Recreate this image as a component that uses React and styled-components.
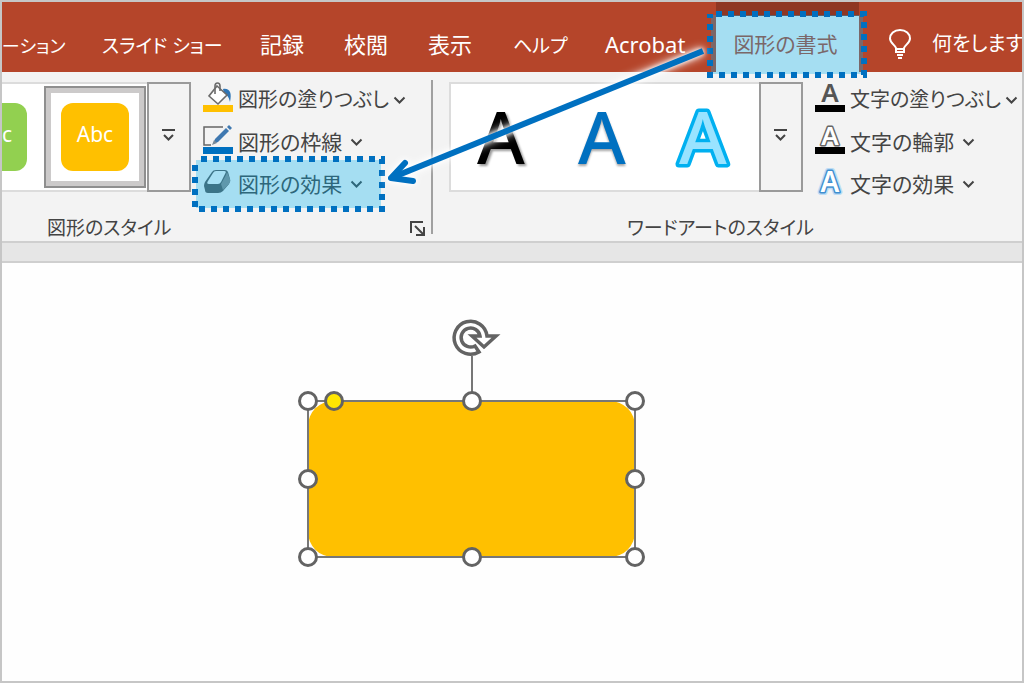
import React from 'react';
import styled, { createGlobalStyle, css } from 'styled-components';

const GlobalStyle = createGlobalStyle`
  * {
    box-sizing: border-box;
  }
  body {
    margin: 0;
    font-family: 'Noto Sans', 'Noto Sans CJK JP', sans-serif;
    font-size: 22px;
    line-height: 32px;
    color: #444;
    font-feature-settings: 'palt';
  }
  button {
    font: inherit;
    font-feature-settings: inherit;
    color: inherit;
    border: 0;
    padding: 0;
    margin: 0;
    background: none;
    cursor: pointer;
  }
  svg {
    flex: none;
    overflow: visible;
  }
`;

const Window = styled.div`
  position: relative;
  display: flex;
  flex-direction: column;
  min-height: 100vh;
  overflow: hidden;
  border: 2px solid #c6c6c6;
  background: #fff;
`;

const TabBar = styled.nav`
  display: flex;
  height: 70px;
  padding-top: 14px;
  background: #b5452a;
  color: #fff;
  white-space: nowrap;
`;

const Tab = styled.button`
  flex: none;
  display: flex;
  align-items: center;
  padding: 0 20px;
  width: ${(p) => p.$width}px;
  color: #fff;
  ${(p) => p.$kana && css`
    padding-top: 3px;
    font-size: 19px;
  `}
  ${(p) => p.$first && css`
    padding-left: 0;
    font-size: 18px;
  `}
`;

const ActiveTab = styled(Tab)`
  position: relative;
  justify-content: center;
  padding: 0 4px 0 0;
  margin: 0 24px 0 4px;
  background: #f3f3f3;
  color: #b5452a;
  font-size: 21px;
  box-shadow: 0 -14px 0 #8f3622;
`;

const TellMe = styled.button`
  flex: 1;
  min-width: 0;
  display: flex;
  align-items: center;
  gap: 20px;
  padding-left: 5px;
  color: #fff;
  font-size: 20px;
`;

const Ribbon = styled.div`
  display: flex;
  height: 171px;
  background: #f3f3f3;
  border-bottom: 2px solid #cfcfcf;
`;

const Group = styled.section`
  display: flex;
  flex-direction: column;
  padding-top: 10px;
  ${(p) => (p.$grow ? css`
    flex: 1;
    padding-left: 16px;
  ` : css`
    flex: 0 0 430px;
  `)}
`;

const Divider = styled.div`
  flex: 0 0 2px;
  margin: 8px 0 7px;
  margin-left: -1px;
  background: #a0a0a0;
`;

const GroupBody = styled.div`
  display: flex;
  height: 110px;
`;

const GroupFooter = styled.footer`
  display: flex;
  align-items: center;
  height: 50px;
  padding-top: 22px;
  ${(p) => (p.$center ? css`
    justify-content: center;
    padding-right: 30px;
  ` : css`
    justify-content: space-between;
    padding-left: 45px;
    padding-right: 7px;
  `)}
`;

const GroupTitle = styled.span`
  color: #444;
  font-size: 19px;
`;

const Launcher = styled.button`
  display: flex;
`;

const Gallery = styled.div`
  display: flex;
  align-items: center;
  flex: ${(p) => (p.$grow ? '1' : '0 0 189px')};
  background: #fff;
  border: 2px solid #dcdcdc;
  border-width: ${(p) => (p.$grow ? '2px 0 2px 2px' : '2px 0')};
`;

const MoreButton = styled.button`
  align-self: stretch;
  flex: 0 0 44px;
  display: flex;
  align-items: center;
  justify-content: center;
  margin: -2px 0;
  padding-bottom: 4px;
  background: #f3f3f3;
  border: 2px solid #9a9a9a;
`;

const Swatch = styled.button`
  display: flex;
  align-items: center;
  justify-content: center;
  width: 68px;
  height: 68px;
  padding-bottom: 6px;
  border-radius: 12px;
  background: ${(p) => p.$color};
  color: #fff;
  font-size: 21px;
`;

const CutSwatch = styled(Swatch)`
  width: 25px;
  margin-right: 17px;
  justify-content: flex-start;
  border-radius: 0 12px 12px 0;
`;

const SelectedFrame = styled.div`
  display: flex;
  align-items: center;
  justify-content: center;
  width: 102px;
  height: 102px;
  margin-right: auto;
  background: #fff;
  border: 2px solid #8f8f8f;
  box-shadow: inset 0 0 0 5px #cccaca;
`;

const Samples = styled.div`
  flex: 1;
  display: flex;
  justify-content: space-around;
  align-items: center;
  padding-right: 6px;
`;

const WordArt = styled.button`
  display: flex;
  justify-content: center;
  width: 98px;
  & > svg {
    filter: ${(p) => p.$shadow || 'none'};
  }
`;

const Commands = styled.div`
  flex: none;
  display: flex;
  flex-direction: column;
  justify-content: space-between;
  align-items: flex-start;
  width: ${(p) => p.$width}px;
  padding-left: 12px;
  margin: -3px 0 -13px;
`;

const Command = styled.button`
  position: relative;
  display: flex;
  align-items: center;
  height: 42px;
  white-space: nowrap;
  font-size: ${(p) => (p.$long ? 20 : 21)}px;
  & > svg:first-child {
    margin-right: 5px;
    margin-bottom: 4px;
  }
  & > svg.chevron {
    margin-left: ${(p) => (p.$long ? 4 : 8)}px;
  }
`;

const Ruler = styled.div`
  height: 20px;
  background: #e6e6e6;
  border-bottom: 2px solid #cfcfcf;
`;

const Canvas = styled.main`
  flex: 1;
  padding: 138px 0 0 306px;
  background: #fefefe;
`;

const Shape = styled.div`
  position: relative;
  width: 327px;
  height: 156px;
  outline: 2px solid #777;
  outline-offset: -1px;
`;

const ShapeFill = styled.div`
  height: 100%;
  border-radius: 25px;
  background: #ffc000;
`;

const Handle = styled.span`
  position: absolute;
  z-index: 1;
  left: ${(p) => p.$x};
  top: ${(p) => p.$y};
  width: 20px;
  height: 20px;
  margin: -10px 0 0 -10px;
  border: 3px solid #636363;
  border-radius: 50%;
  background: ${(p) => p.$color || '#fff'};
`;

const Rotate = styled.svg`
  position: absolute;
  left: 50%;
  top: -83px;
  margin-left: -21px;
`;

const Highlight = styled.svg`
  position: absolute;
  top: ${(p) => p.$top}px;
  left: ${(p) => p.$left}px;
  width: ${(p) => p.$width}px;
  height: ${(p) => p.$height}px;
  z-index: 2;
  pointer-events: none;
`;

const Arrow = styled.svg`
  position: absolute;
  left: 368px;
  top: 30px;
  z-index: 3;
  pointer-events: none;
  filter: drop-shadow(0 0 2px #fff) drop-shadow(0 0 4px #fff);
`;

const Marker = ({ top, left, width, height }) => (
  <Highlight $top={top} $left={left} $width={width} $height={height} viewBox={`0 0 ${width} ${height}`}>
    <rect x="4" y="4" width={width - 8} height={height - 8} fill="#00b0f0" fillOpacity="0.32" />
    <rect x="3" y="3" width={width - 6} height={height - 6} fill="none" stroke="#0070c0" strokeWidth="6" strokeDasharray="6 6" strokeDashoffset="-6" />
  </Highlight>
);

const Chevron = () => (
  <svg className="chevron" width="13" height="10" viewBox="0 0 13 10" fill="none" stroke="#444" strokeWidth="2">
    <path d="M1.5 2.5 6.5 7.5 11.5 2.5" />
  </svg>
);

const More = () => (
  <MoreButton aria-label="その他">
    <svg width="14" height="14" viewBox="0 0 14 14" fill="none" stroke="#444" strokeWidth="2">
      <path d="M0 2h13M2 7l4.500 4.500L11 7" />
    </svg>
  </MoreButton>
);

const FillIcon = () => (
  <svg width="30" height="30" viewBox="0 0 30 30" fill="none">
    <path d="M20 6c7-1 9 4 7 13-1-4-2-7-6-8z" fill="#2f75b5" />
    <path d="M14 3 24 12 15 21 6 13z" fill="#fff" stroke="#6b6b6b" strokeWidth="1.600" />
    <path d="M12 11V3c0-4 5-4 5 0v5" stroke="#6b6b6b" strokeWidth="1.600" />
    <path d="M0 22h30v7H0z" fill="#ffc000" />
  </svg>
);

const OutlineIcon = () => (
  <svg width="30" height="30" viewBox="0 0 30 30" fill="none">
    <path d="M20 2H1v18h7" stroke="#666" strokeWidth="1.500" />
    <path d="M10 19 12 14 23 3 26 6 15 17z" fill="#3f78b0" />
    <path d="M24 2l2-2 3 3-2 2z" fill="#3f78b0" />
    <path d="M9 20l2-5 3 3z" fill="#7b8b99" />
    <path d="M0 22h30v7H0z" fill="#0070c0" />
  </svg>
);

const EffectIcon = () => (
  <svg width="30" height="30" viewBox="0 0 30 30">
    <path d="M9 5Q10 3 13 3H22Q24 3 25 5L27 12Q28 14 26 17L20 24Q18 26 15 26H5Q2 26 2 23L1 19Q1 17 2 15z" fill="#585858" />
    <path d="M10 6Q11 4 13 4H21Q24 4 22 7L18 15Q17 17 15 17H6Q3 17 5 14z" fill="#f7f7f7" />
    <path d="M24 5 27 12Q28 14 26 17L20 23 18 17 23 8z" fill="#8c8c8c" />
  </svg>
);

const LetterIcon = ({ kind }) => (
  <svg width="30" height="30" viewBox="0 0 30 30" fontFamily="Noto Sans, sans-serif" fontWeight="600" textAnchor="middle">
    {kind === 'fill' && <text x="15" y="19" fontSize="26" fill="#555">A</text>}
    {kind === 'outline' && <text x="15" y="20" fontSize="26" fill="#fff" stroke="#666" strokeWidth="3" paintOrder="stroke" strokeLinejoin="round">A</text>}
    {kind === 'effect' && (
      <>
        <text x="15" y="25" fontSize="28" fill="none" stroke="#bcdcf5" strokeWidth="6" strokeLinejoin="round">A</text>
        <text x="15" y="25" fontSize="28" fill="#fff" stroke="#3f8fd0" strokeWidth="3" paintOrder="stroke" strokeLinejoin="round">A</text>
      </>
    )}
    {kind !== 'effect' && <path d="M0 22h30v7H0z" fill="#000" />}
  </svg>
);

const SampleLetter = ({ color, stroke, border }) => (
  <svg width="60" height="70" viewBox="0 0 60 70" fontFamily="Noto Sans, sans-serif" fontWeight="500" fontSize="73" textAnchor="middle">
    <text x="30" y="62" fill={color} stroke={stroke} strokeWidth={border} strokeLinejoin="round" paintOrder="stroke">A</text>
  </svg>
);

const BulbIcon = () => (
  <svg width="24" height="30" viewBox="0 0 24 30" fill="none" stroke="#fff" strokeWidth="2">
    <path d="M8 23v-4C7 16 2 14 2 9.500 2 5 6 1 12 1s10 4 10 8.500C22 14 17 16 16 19v4z" />
    <path d="M8 20h8M9 26h6M10 29h4" />
  </svg>
);

const tabs = [
  { label: 'ーション', width: 80, first: true, kana: true },
  { label: 'スライド ショー', width: 158, kana: true },
  { label: '記録', width: 84 },
  { label: '校閲', width: 84 },
  { label: '表示', width: 85 },
  { label: 'ヘルプ', width: 92, kana: true },
  { label: 'Acrobat', width: 127 },
];

const App = () => (
  <>
    <GlobalStyle />
    <Window>
      <TabBar>
        {tabs.map((t) => (
          <Tab key={t.label} $width={t.width} $first={t.first} $kana={t.kana}>{t.label}</Tab>
        ))}
        <ActiveTab $width={143}>
          図形の書式
          <Marker top={-5} left={-9} width={160} height={67} />
        </ActiveTab>
        <TellMe>
          <BulbIcon />
          何をします
        </TellMe>
      </TabBar>

      <Ribbon>
        <Group>
          <GroupBody>
            <Gallery>
              <CutSwatch $color="#92d050">c</CutSwatch>
              <SelectedFrame>
                <Swatch $color="#ffc000">Abc</Swatch>
              </SelectedFrame>
              <More />
            </Gallery>
            <Commands $width={240}>
              <Command $long><FillIcon />図形の塗りつぶし<Chevron /></Command>
              <Command><OutlineIcon />図形の枠線<Chevron /></Command>
              <Command>
                <EffectIcon />図形の効果<Chevron />
                <Marker top={-7} left={-11} width={193} height={56} />
              </Command>
            </Commands>
          </GroupBody>
          <GroupFooter>
            <GroupTitle>図形のスタイル</GroupTitle>
            <Launcher aria-label="図形の書式設定">
              <svg width="15" height="15" viewBox="0 0 15 15" fill="none" stroke="#444" strokeWidth="2">
                <path d="M1 12V1h12M5 5l8 8M14 6v8H6" />
              </svg>
            </Launcher>
          </GroupFooter>
        </Group>
        <Divider />
        <Group $grow>
          <GroupBody>
            <Gallery $grow>
              <Samples>
                <WordArt $shadow="drop-shadow(2px 2px 1px rgba(0, 0, 0, 0.4))">
                  <SampleLetter color="#000" />
                </WordArt>
                <WordArt $shadow="drop-shadow(0 2px 1px rgba(0, 0, 0, 0.35))">
                  <SampleLetter color="#0070c0" />
                </WordArt>
                <WordArt>
                  <SampleLetter color="#99e3ff" stroke="#00b0f0" border="7" />
                </WordArt>
              </Samples>
              <More />
            </Gallery>
            <Commands $width={219}>
              <Command $long><LetterIcon kind="fill" />文字の塗りつぶし<Chevron /></Command>
              <Command><LetterIcon kind="outline" />文字の輪郭<Chevron /></Command>
              <Command><LetterIcon kind="effect" />文字の効果<Chevron /></Command>
            </Commands>
          </GroupBody>
          <GroupFooter $center>
            <GroupTitle>ワードアートのスタイル</GroupTitle>
          </GroupFooter>
        </Group>
      </Ribbon>
      <Ruler />

      <Canvas>
        <Shape>
          <ShapeFill />
          <Rotate width="50" height="84" viewBox="0 0 50 84" fill="none">
            <path d="M21 38v45" stroke="#777" strokeWidth="2" />
            <path d="M28 34A16.500 16.500 0 1 1 36 18H45L33 29 21 18H29A9.500 9.500 0 1 0 24 28z" fill="#fff" stroke="#636363" strokeWidth="3.500" />
          </Rotate>
          <Handle $x="0%" $y="0%" />
          <Handle $x="50%" $y="0%" />
          <Handle $x="100%" $y="0%" />
          <Handle $x="0%" $y="50%" />
          <Handle $x="100%" $y="50%" />
          <Handle $x="0%" $y="100%" />
          <Handle $x="50%" $y="100%" />
          <Handle $x="100%" $y="100%" />
          <Handle $x="8%" $y="0%" $color="#ffe600" />
        </Shape>
      </Canvas>

      <Arrow width="350" height="170" viewBox="370 32 350 170" fill="none" stroke="#0070c0" strokeWidth="6">
        <path d="M703 51 396 176" />
        <path d="M405 163 391 178 413 181" strokeLinecap="round" strokeLinejoin="round" />
      </Arrow>
    </Window>
  </>
);

export default App;
